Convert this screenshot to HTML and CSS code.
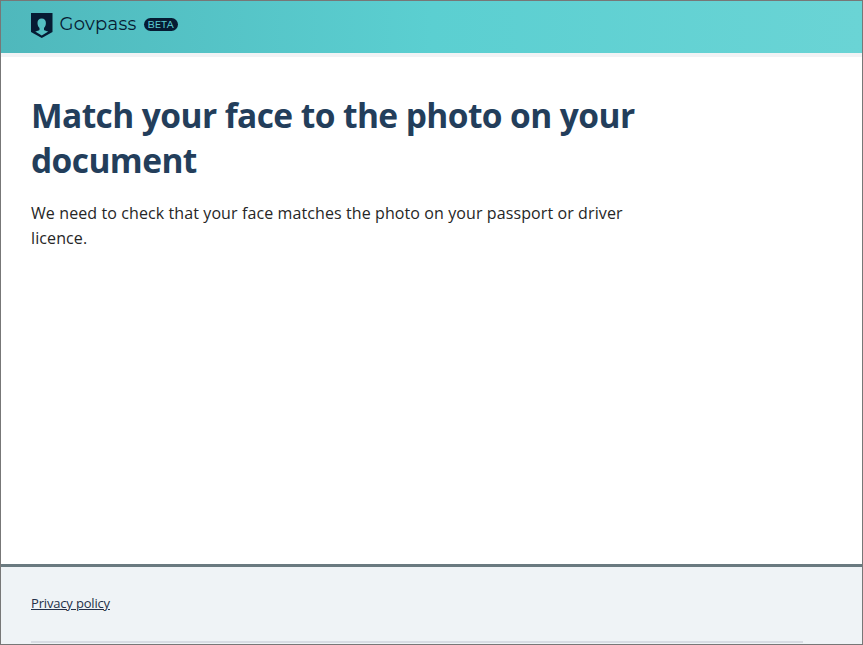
FILE: index.html
```html
<!DOCTYPE html>
<html lang="en">
<head>
<meta charset="utf-8">
<title>Govpass</title>
<link rel="stylesheet" href="styles.css">
</head>
<body>
<div class="page">
<header class="header">
<svg class="logo" viewBox="0 0 22 25" aria-hidden="true"><path fill="#061b33" d="M0 0h21.500v19L10.750 25 0 19z"/><path fill="#53bfc2" d="M10.700 5.500c2.700 0 4.200 1.700 4.200 4.500 0 2.200-.8 4-1.900 5v2c1 .7 2.500 1 4.300 1.500L10.750 22.500 4.200 18.500c1.800-.5 3.300-.8 4.300-1.500v-2c-1.200-1-2-2.800-2-5 0-2.800 1.500-4.500 4.200-4.500z"/></svg>
<span class="brand">Govpass</span>
<span class="badge">BETA</span>
</header>
<main class="main">
<h1>Match your face to the photo on your document</h1>
<p>We need to check that your face matches the photo on your passport or driver licence.</p>
</main>
<footer class="footer">
<a href="#">Privacy policy</a>
<div class="rule"></div>
</footer>
</div>
</body>
</html>
```
FILE: styles.css
```css
* { box-sizing: border-box; }
body { margin: 0; font-family: "Open Sans", sans-serif; }
.page { height: 645px; border: 1px solid #777; display: flex; flex-direction: column; overflow: hidden; background: #fff; }
.header { height: 56px; flex: none; display: flex; align-items: flex-start; padding: 12px 30px 0; border-bottom: 4px solid #f1f3f5; background: linear-gradient(90deg, #4fb8bc, #5bcfd1 50%, #6ad4d5); background-clip: padding-box; color: #061b33; }
.logo { width: 22px; height: 25px; }
.brand { font: 400 18px/22px Montserrat, Lato, sans-serif; letter-spacing: .3px; margin-left: 6.500px; }
.badge { height: 13px; width: 34px; margin: 5px 0 0 7px; border-radius: 7px; background: #061b33; color: #5acbcf; font: 500 9.500px/13px Montserrat, Inter, sans-serif; text-align: center; letter-spacing: .1px; }
.main { flex: 1; padding: 36px 30px 0; }
h1 { width: 620px; margin: 0; color: #233e5b; font-size: 33.500px; line-height: 45px; font-weight: 700; letter-spacing: -.58px; }
p { width: 620px; margin: 18px 0 0; color: #262626; font-size: 16px; line-height: 25px; letter-spacing: .1px; }
.footer { height: 80px; flex: none; border-top: 3px solid #6a7a80; background: #eff3f6; padding: 26px 30px 0; font-size: 13px; line-height: 20px; letter-spacing: -.17px; }
.footer a { display: block; color: #243048; }
.rule { width: 772px; height: 2px; margin-top: 28px; background: #d8dce3; }
```
